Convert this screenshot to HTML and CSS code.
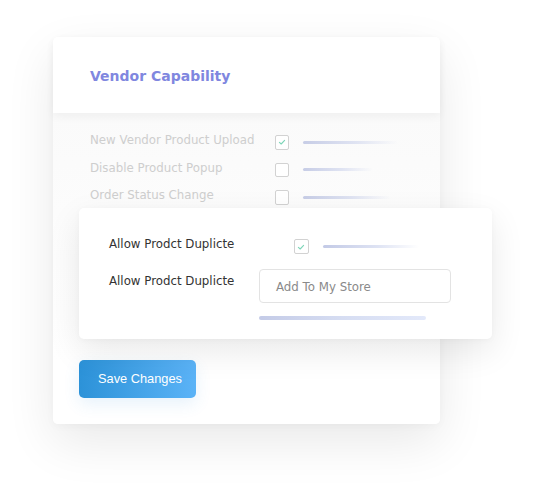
FILE: index.html
```html
<!DOCTYPE html>
<html>
<head>
<meta charset="utf-8">
<link rel="stylesheet" href="styles.css">
</head>
<body>
<div class="stage">
  <div class="card">
    <div class="card-header">
      <h2 class="title">Vendor Capability</h2>
    </div>
    <div class="card-body">
      <div class="rows">
        <div class="row">
          <span class="label">New Vendor Product Upload</span>
          <span class="check checked"><svg viewBox="0 0 14 14" width="14" height="14"><path d="M4.4 7.3 L6.2 9 L9.6 5.4" fill="none" stroke="#7dd5b8" stroke-width="1.1" stroke-linecap="round" stroke-linejoin="round"/></svg></span>
          <span class="bar bar-a"></span>
        </div>
        <div class="row">
          <span class="label">Disable Product Popup</span>
          <span class="check"></span>
          <span class="bar bar-b"></span>
        </div>
        <div class="row">
          <span class="label">Order Status Change</span>
          <span class="check"></span>
          <span class="bar bar-c"></span>
        </div>
      </div>

      <div class="popup">
        <div class="prow prow-check">
          <span class="plabel">Allow Prodct Duplicte</span>
          <span class="check checked"><svg viewBox="0 0 14 14" width="14" height="14"><path d="M4.4 7.3 L6.2 9 L9.6 5.4" fill="none" stroke="#7dd5b8" stroke-width="1.1" stroke-linecap="round" stroke-linejoin="round"/></svg></span>
          <span class="bar bar-p"></span>
        </div>
        <div class="prow prow-input">
          <span class="plabel short">Allow Prodct Duplicte</span>
          <div class="field">
            <div class="input">Add To My Store</div>
            <span class="bar-under"></span>
          </div>
        </div>
      </div>

      <button class="save">Save Changes</button>
    </div>
  </div>
</div>
</body>
</html>
```

FILE: styles.css
```css
* { box-sizing: border-box; }
html, body { margin: 0; padding: 0; background: #ffffff; }
body {
  width: 548px;
  height: 491px;
  overflow: hidden;
  font-family: "DejaVu Sans", Verdana, sans-serif;
}
.stage {
  padding: 37px 0 0 53px;
}
.card {
  width: 387px;
  height: 387px;
  background: #ffffff;
  border-radius: 5px;
  box-shadow: 0 18px 50px rgba(0, 0, 0, 0.09), 0 2px 10px rgba(0, 0, 0, 0.03);
  display: flex;
  flex-direction: column;
}
.card-header {
  height: 76px;
  flex: none;
  padding-left: 37px;
  display: flex;
  align-items: center;
  background: #ffffff;
  border-radius: 5px 5px 0 0;
  box-shadow: 0 4px 9px rgba(0, 0, 0, 0.045);
  position: relative;
  z-index: 1;
}
.title {
  margin: 0;
  font-size: 14px;
  font-weight: bold;
  color: #8087df;
  padding-top: 2px;
}
.card-body {
  flex: 1;
  display: flex;
  flex-direction: column;
  background: linear-gradient(#fafafa, #ffffff 80%);
  border-radius: 0 0 5px 5px;
}
.rows {
  padding: 15.5px 0 0 37px;
}
.row {
  height: 27.5px;
  display: flex;
  align-items: center;
}
.label {
  width: 184.5px;
  font-size: 11.8px;
  color: #cecece;
  margin-top: -4px;
  flex: none;
}
.check {
  width: 14.5px;
  height: 14.5px;
  border: 1px solid #d2d2d2;
  border-radius: 2px;
  background: #ffffff;
  display: flex;
  align-items: center;
  justify-content: center;
  flex: none;
}
.check svg { display: block; margin: -1px; }
.bar {
  height: 3px;
  border-radius: 2px;
  margin-left: 14px;
  flex: none;
}
.bar-a { width: 95px; background: linear-gradient(90deg, #c7cde6 0%, #dfe3f2 55%, rgba(240, 242, 250, 0) 100%); }
.bar-b { width: 70px; background: linear-gradient(90deg, #c7cde6 0%, #dfe3f2 55%, rgba(240, 242, 250, 0) 100%); }
.bar-c { width: 88px; background: linear-gradient(90deg, #c7cde6 0%, #dfe3f2 55%, rgba(240, 242, 250, 0) 100%); }
.bar-p { width: 96px; background: linear-gradient(90deg, #c3cae6 0%, #dde2f3 55%, rgba(240, 242, 250, 0) 100%); }

.popup {
  width: 413px;
  height: 131px;
  flex: none;
  margin: -3px 0 0 26px;
  background: #ffffff;
  border-radius: 5px;
  box-shadow: 0 12px 34px rgba(0, 0, 0, 0.09), 0 1px 6px rgba(0, 0, 0, 0.03);
  padding: 29px 0 0 30px;
  position: relative;
  z-index: 2;
}
.prow {
  display: flex;
  align-items: flex-start;
}
.prow-check {
  height: 16px;
}
.plabel {
  width: 185px;
  font-size: 11.8px;
  color: #333333;
  flex: none;
}
.prow-check .check { margin-top: 2.3px; }
.prow-check .bar { margin-top: 7.5px; }
.prow-input {
  margin-top: 16px;
}
.plabel.short {
  width: 150px;
  padding-top: 5.2px;
}
.field {
  display: flex;
  flex-direction: column;
}
.input {
  width: 192px;
  height: 34px;
  border: 1px solid #e3e3e3;
  border-radius: 4px;
  padding: 1px 0 0 16px;
  display: flex;
  align-items: center;
  font-size: 11.8px;
  color: #8a8a8a;
}
.bar-under {
  width: 167px;
  height: 4px;
  border-radius: 2px;
  margin-top: 13px;
  background: linear-gradient(90deg, #c4cbe7 0%, #d6ddf2 50%, #e3e9fa 100%);
}

.save {
  align-self: flex-start;
  flex: none;
  margin: 20.5px 0 0 26px;
  width: 117px;
  height: 38px;
  border: none;
  border-radius: 5px;
  background: linear-gradient(90deg, #2c92d8 0%, #5bb3f7 100%);
  color: #ffffff;
  font-family: "Liberation Sans", Arial, sans-serif;
  font-size: 12.8px;
  padding: 0 0 0 5px;
  box-shadow: 0 6px 16px rgba(60, 150, 220, 0.12);
  cursor: pointer;
}
```
